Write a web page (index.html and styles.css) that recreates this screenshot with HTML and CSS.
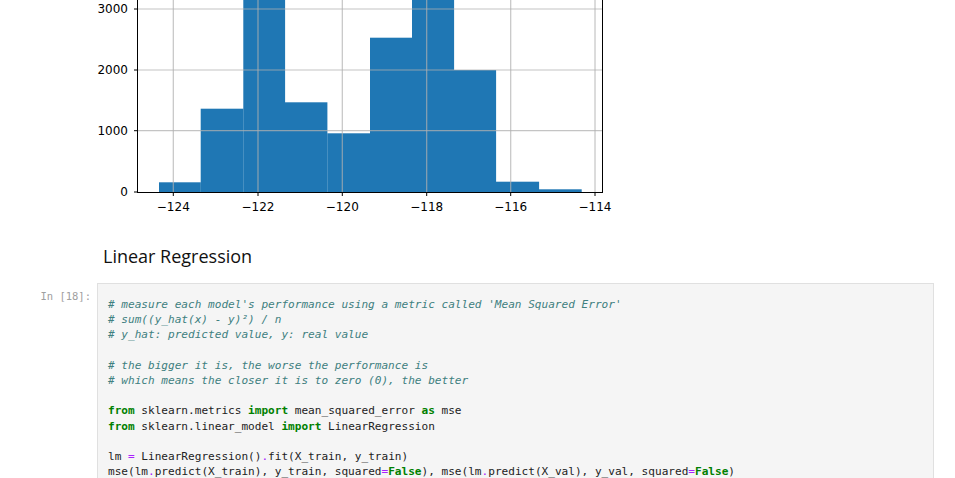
FILE: index.html
```html
<!DOCTYPE html>
<html>
<head>
<meta charset="utf-8">
<link rel="stylesheet" href="styles.css">
</head>
<body>
<div class="notebook">
  <div class="output-row">
    <div class="prompt-col"></div>
    <svg class="chart" width="530" height="222" viewBox="97 0 530 222" xmlns="http://www.w3.org/2000/svg">
      <g fill="#1f77b4">
        <rect x="159.0" y="182.3" width="41.8" height="9.7"/>
        <rect x="200.7" y="108.7" width="42.7" height="83.3"/>
        <rect x="243.3" y="-10" width="41.8" height="202"/>
        <rect x="285.0" y="102.3" width="42.4" height="89.7"/>
        <rect x="327.3" y="133.3" width="42.8" height="58.7"/>
        <rect x="370.0" y="37.7" width="42.1" height="154.3"/>
        <rect x="412.0" y="-10" width="42.1" height="202"/>
        <rect x="454.0" y="70.0" width="42.1" height="122"/>
        <rect x="496.0" y="181.7" width="43.1" height="10.3"/>
        <rect x="539.0" y="189.3" width="42.7" height="2.7"/>
      </g>
      <g stroke="#b0b0b0" stroke-width="1.2" stroke-opacity="0.75" fill="none">
        <line x1="137.3" y1="9" x2="602.3" y2="9"/>
        <line x1="137.3" y1="70" x2="602.3" y2="70"/>
        <line x1="137.3" y1="130.7" x2="602.3" y2="130.7"/>
        <line x1="173.3" y1="-5" x2="173.3" y2="192"/>
        <line x1="258.0" y1="-5" x2="258.0" y2="192"/>
        <line x1="342.3" y1="-5" x2="342.3" y2="192"/>
        <line x1="426.7" y1="-5" x2="426.7" y2="192"/>
        <line x1="510.7" y1="-5" x2="510.7" y2="192"/>
        <line x1="595.0" y1="-5" x2="595.0" y2="192"/>
      </g>
      <g stroke="#000" stroke-width="1" fill="none">
        <line x1="137.5" y1="-5" x2="137.5" y2="192.5"/>
        <line x1="602.5" y1="-5" x2="602.5" y2="192.5"/>
        <line x1="137" y1="192.5" x2="603" y2="192.5"/>
        <line x1="134" y1="9" x2="137.5" y2="9"/>
        <line x1="134" y1="70" x2="137.5" y2="70"/>
        <line x1="134" y1="130.7" x2="137.5" y2="130.7"/>
        <line x1="134" y1="192" x2="137.5" y2="192"/>
        <line x1="173.3" y1="192.5" x2="173.3" y2="196"/>
        <line x1="258.0" y1="192.5" x2="258.0" y2="196"/>
        <line x1="342.3" y1="192.5" x2="342.3" y2="196"/>
        <line x1="426.7" y1="192.5" x2="426.7" y2="196"/>
        <line x1="510.7" y1="192.5" x2="510.7" y2="196"/>
        <line x1="595.0" y1="192.5" x2="595.0" y2="196"/>
      </g>
      <g class="ticklabel" text-anchor="end">
        <text x="128" y="13.4">3000</text>
        <text x="128" y="74.4">2000</text>
        <text x="128" y="135.1">1000</text>
        <text x="128" y="196.2">0</text>
      </g>
      <g class="ticklabel" text-anchor="middle">
        <text x="173.3" y="211.2">−124</text>
        <text x="258.0" y="211.2">−122</text>
        <text x="342.3" y="211.2">−120</text>
        <text x="426.7" y="211.2">−118</text>
        <text x="510.7" y="211.2">−116</text>
        <text x="595.0" y="211.2">−114</text>
      </g>
    </svg>
  </div>

  <div class="md-row">
    <h2 class="md-heading">Linear Regression</h2>
  </div>

  <div class="code-row">
    <div class="prompt">In&nbsp;[18]:</div>
    <div class="code-box">
<pre class="code"><span class="c"># measure each model's performance using a metric called 'Mean Squared Error'</span>
<span class="c"># sum((y_hat(x) - y)²) / n</span>
<span class="c"># y_hat: predicted value, y: real value</span>

<span class="c"># the bigger it is, the worse the performance is</span>
<span class="c"># which means the closer it is to zero (0), the better</span>

<span class="k">from</span> sklearn.metrics <span class="k">import</span> mean_squared_error <span class="k">as</span> mse
<span class="k">from</span> sklearn.linear_model <span class="k">import</span> LinearRegression

lm <span class="o">=</span> LinearRegression()<span class="o">.</span>fit(X_train, y_train)
mse(lm<span class="o">.</span>predict(X_train), y_train, squared<span class="o">=</span><span class="k">False</span>), mse(lm<span class="o">.</span>predict(X_val), y_val, squared<span class="o">=</span><span class="k">False</span>)
</pre>
    </div>
  </div>
</div>
</body>
</html>
```

FILE: styles.css
```css
html, body {
  margin: 0;
  padding: 0;
  background: #ffffff;
  overflow: hidden;
}

.notebook {
  width: 955px;
  display: flex;
  flex-direction: column;
}

.output-row {
  display: flex;
}

.prompt-col {
  width: 97px;
  flex: none;
}

.chart {
  display: block;
}

.ticklabel {
  font-family: "DejaVu Sans", sans-serif;
  font-size: 12px;
  fill: #000;
}

.md-row {
  padding-left: 103px;
  margin-top: 22px;
}

.md-heading {
  margin: 0;
  font-family: "Open Sans", sans-serif;
  font-size: 18px;
  font-weight: 500;
  line-height: 24px;
  color: #111;
}

.code-row {
  display: flex;
  margin-top: 15px;
}

.prompt {
  width: 97px;
  flex: none;
  box-sizing: border-box;
  text-align: right;
  padding-right: 6px;
  padding-top: 6px;
  font-family: "DejaVu Sans Mono", monospace;
  font-size: 10.5px;
  line-height: 15px;
  color: #a0a0a0;
}

.code-box {
  width: 837px;
  box-sizing: border-box;
  background: #f5f5f5;
  border: 1px solid #e0e0e0;
  padding: 12.5px 10px 20px 10px;
}

.code {
  margin: 0;
  font-family: "DejaVu Sans Mono", monospace;
  font-size: 11.08px;
  line-height: 15.25px;
  color: #222;
  white-space: pre;
}

.c {
  color: #408080;
  font-style: italic;
}

.k {
  color: #008000;
  font-weight: bold;
}

.o {
  color: #aa22ff;
}
```
